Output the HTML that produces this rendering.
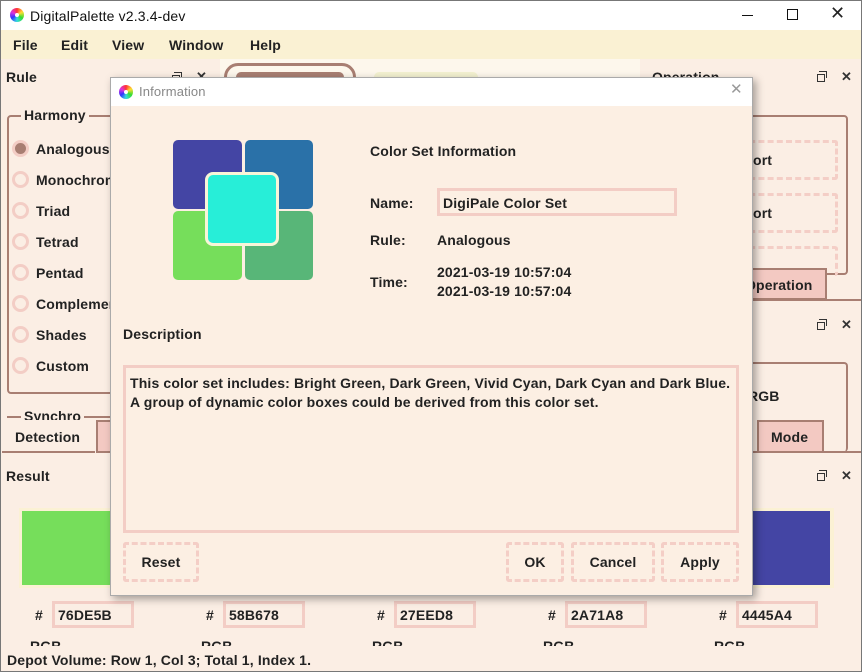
<!DOCTYPE html>
<html><head><meta charset="utf-8"><style>
*{box-sizing:border-box;margin:0;padding:0}
body{width:862px;height:672px;overflow:hidden;position:relative;background:#fbeee4;font-family:"Liberation Sans",sans-serif;font-weight:bold;font-size:14px;letter-spacing:0.15px;color:#222}
.a{position:absolute}
.t{position:absolute;white-space:nowrap;line-height:16px}
.rad{position:absolute;left:12px;width:17px;height:17px;border-radius:50%;border:3px solid #f3cdc5;background:#fbeee4}
.hex{position:absolute;top:601px;width:82px;height:27px;border:3px solid #f3cdc5;padding:3px 0 0 3px}
.dash{position:absolute;border:3px dashed #f4cec6;border-radius:3px;text-align:center}
.fl{position:absolute;width:8px;height:8px;border:1.5px solid #333}
.fl::before{content:"";position:absolute;left:1px;top:-4px;width:7px;height:6px;border:1.5px solid #333;border-left:none;border-bottom:none}
.cx{position:absolute;font-size:13px;line-height:13px;color:#333}
</style></head><body>
<div class="a" style="left:0;top:0;width:862px;height:672px;border:1px solid #777;z-index:50;pointer-events:none"></div>
<div class="a" style="left:0;top:0;width:862px;height:30px;background:#fff"></div>
<div class="a" style="left:10px;top:8px;width:14px;height:14px;border-radius:50%;background:conic-gradient(#f33,#fd3,#3d3,#3dd,#33f,#d3d,#f33)"></div>
<div class="a" style="left:15px;top:13px;width:4px;height:4px;border-radius:50%;background:#fff"></div>
<div class="t" style="left:30px;top:8px;font-weight:normal;font-size:14px;color:#111">DigitalPalette v2.3.4-dev</div>
<div class="a" style="left:742px;top:15px;width:11px;height:1px;background:#111"></div>
<div class="a" style="left:787px;top:9px;width:11px;height:11px;border:1px solid #111"></div>
<div class="t" style="left:830px;top:5px;font-weight:normal;font-size:18px">✕</div>
<div class="a" style="left:0;top:30px;width:862px;height:29px;background:#faf1d3"></div>
<div class="t" style="left:13px;top:37px">File</div>
<div class="t" style="left:61px;top:37px">Edit</div>
<div class="t" style="left:112px;top:37px">View</div>
<div class="t" style="left:169px;top:37px">Window</div>
<div class="t" style="left:250px;top:37px">Help</div>
<div class="a" style="left:220px;top:59px;width:420px;height:20px;background:#fdf7ec"></div>
<div class="a" style="left:224px;top:63px;width:132px;height:30px;border:3px solid #a87e72;border-radius:14px"></div>
<div class="a" style="left:236px;top:72px;width:108px;height:10px;background:#a87e72;border-radius:5px"></div>
<div class="a" style="left:374px;top:72px;width:104px;height:10px;background:#f3f1d0;border-radius:5px"></div>
<div class="t" style="left:6px;top:69px">Rule</div>
<div class="fl" style="left:172px;top:75px"></div><div class="cx" style="left:196px;top:70px">✕</div>
<div class="a" style="left:7px;top:115px;width:210px;height:279px;border:2px solid #a87e72;border-radius:4px"></div>
<div class="t" style="left:21px;top:107px;background:#fbeee4;padding:0 3px">Harmony</div>
<div class="rad" style="top:140px;background:#a87e72;border-color:#f3cdc5"></div>
<div class="t" style="left:36px;top:141px">Analogous</div>
<div class="rad" style="top:171px"></div><div class="t" style="left:36px;top:172px">Monochromatic</div>
<div class="rad" style="top:202px"></div><div class="t" style="left:36px;top:203px">Triad</div>
<div class="rad" style="top:233px"></div><div class="t" style="left:36px;top:234px">Tetrad</div>
<div class="rad" style="top:264px"></div><div class="t" style="left:36px;top:265px">Pentad</div>
<div class="rad" style="top:295px"></div><div class="t" style="left:36px;top:296px">Complementary</div>
<div class="rad" style="top:326px"></div><div class="t" style="left:36px;top:327px">Shades</div>
<div class="rad" style="top:357px"></div><div class="t" style="left:36px;top:358px">Custom</div>
<div class="a" style="left:7px;top:416px;width:210px;height:2px;background:#a87e72"></div>
<div class="t" style="left:21px;top:408px;background:#fbeee4;padding:0 3px;height:12px;overflow:hidden">Synchro</div>
<div class="t" style="left:15px;top:429px">Detection</div>
<div class="a" style="left:2px;top:451px;width:93px;height:2px;background:#a87e72"></div>
<div class="a" style="left:96px;top:420px;width:20px;height:33px;background:#f3c9c2;border:2px solid #a87e72"></div>
<div class="t" style="left:6px;top:468px">Result</div>
<div class="fl" style="left:817px;top:473px"></div><div class="cx" style="left:841px;top:469px">✕</div>
<div class="a" style="left:19px;top:508px;width:100px;height:80px;background:#fbf1d4"></div>
<div class="a" style="left:22px;top:511px;width:95px;height:74px;background:#76de5b"></div>
<div class="a" style="left:752px;top:508px;width:82px;height:80px;background:#fbf1d4"></div>
<div class="a" style="left:752px;top:511px;width:78px;height:74px;background:#4445a4"></div>
<div class="t" style="left:35px;top:607px">#</div><div class="hex" style="left:52px">76DE5B</div>
<div class="t" style="left:206px;top:607px">#</div><div class="hex" style="left:223px">58B678</div>
<div class="t" style="left:377px;top:607px">#</div><div class="hex" style="left:394px">27EED8</div>
<div class="t" style="left:548px;top:607px">#</div><div class="hex" style="left:565px">2A71A8</div>
<div class="t" style="left:719px;top:607px">#</div><div class="hex" style="left:736px">4445A4</div>
<div class="a" style="left:30px;top:638px;width:800px;height:8px;overflow:hidden"><span class="t" style="left:0;top:0">RGB</span><span class="t" style="left:171px;top:0">RGB</span><span class="t" style="left:342px;top:0">RGB</span><span class="t" style="left:513px;top:0">RGB</span><span class="t" style="left:684px;top:0">RGB</span></div>
<div class="t" style="left:7px;top:652px">Depot Volume: Row 1, Col 3; Total 1, Index 1.</div>
<div class="a" style="left:640px;top:59px;width:222px;height:400px;background:#fbeee4"></div>
<div class="t" style="left:652px;top:69px">Operation</div>
<div class="fl" style="left:817px;top:74px"></div><div class="cx" style="left:841px;top:70px">✕</div>
<div class="a" style="left:700px;top:115px;width:148px;height:160px;border:2px solid #a87e72;border-radius:4px"></div>
<div class="dash" style="left:740px;top:140px;width:98px;height:40px"></div><div class="t" style="left:753px;top:152px">ort</div>
<div class="dash" style="left:740px;top:193px;width:98px;height:40px"></div><div class="t" style="left:753px;top:205px">ort</div>
<div class="dash" style="left:740px;top:246px;width:98px;height:30px;border-bottom:none"></div>
<div class="a" style="left:700px;top:268px;width:127px;height:32px;background:#f3c9c2;border:2px solid #a87e72"></div>
<div class="t" style="left:745px;top:277px">Operation</div>
<div class="a" style="left:700px;top:299px;width:162px;height:2px;background:#a87e72"></div>
<div class="fl" style="left:817px;top:322px"></div><div class="cx" style="left:841px;top:318px">✕</div>
<div class="a" style="left:700px;top:362px;width:148px;height:90px;border:2px solid #a87e72;border-radius:4px;border-bottom:none"></div>
<div class="t" style="left:748px;top:388px">RGB</div>
<div class="a" style="left:757px;top:420px;width:67px;height:33px;background:#f3c9c2;border:2px solid #a87e72"></div>
<div class="t" style="left:771px;top:429px">Mode</div>
<div class="a" style="left:700px;top:451px;width:162px;height:2px;background:#a87e72"></div>
<div class="a" style="left:110px;top:77px;width:643px;height:519px;background:#fcefe3;border:1px solid #aaa;box-shadow:3px 3px 8px rgba(0,0,0,.35)"></div>
<div class="a" style="left:111px;top:78px;width:641px;height:28px;background:#fff"></div>
<div class="a" style="left:119px;top:85px;width:14px;height:14px;border-radius:50%;background:conic-gradient(#f33,#fd3,#3d3,#3dd,#33f,#d3d,#f33)"></div>
<div class="a" style="left:124px;top:90px;width:4px;height:4px;border-radius:50%;background:#fff"></div>
<div class="t" style="left:139px;top:84px;font-weight:normal;font-size:13px;color:#888">Information</div>
<div class="t" style="left:730px;top:82px;font-weight:normal;font-size:15px;color:#999">✕</div>
<div class="a" style="left:173px;top:140px;width:69px;height:69px;background:#4445a4;border-radius:5px"></div>
<div class="a" style="left:245px;top:140px;width:68px;height:69px;background:#2a71a8;border-radius:5px"></div>
<div class="a" style="left:173px;top:211px;width:69px;height:69px;background:#76de5b;border-radius:5px"></div>
<div class="a" style="left:245px;top:211px;width:68px;height:69px;background:#58b678;border-radius:5px"></div>
<div class="a" style="left:205px;top:172px;width:74px;height:74px;background:#27eed8;border:3px solid #f8f5d8;border-radius:8px"></div>
<div class="t" style="left:370px;top:143px">Color Set Information</div>
<div class="t" style="left:370px;top:195px">Name:</div>
<div class="a" style="left:437px;top:188px;width:240px;height:28px;border:3px solid #f3cdc5;padding:4px 0 0 3px">DigiPale Color Set</div>
<div class="t" style="left:370px;top:232px">Rule:</div>
<div class="t" style="left:437px;top:232px">Analogous</div>
<div class="t" style="left:370px;top:274px">Time:</div>
<div class="t" style="left:437px;top:264px">2021-03-19 10:57:04</div>
<div class="t" style="left:437px;top:283px">2021-03-19 10:57:04</div>
<div class="t" style="left:123px;top:326px">Description</div>
<div class="a" style="left:123px;top:365px;width:616px;height:168px;border:3px solid #f3cdc5;padding:6px 4px;line-height:19px">This color set includes: Bright Green, Dark Green, Vivid Cyan, Dark Cyan and Dark Blue.<br>A group of dynamic color boxes could be derived from this color set.</div>
<div class="dash" style="left:123px;top:542px;width:76px;height:40px;line-height:34px">Reset</div>
<div class="dash" style="left:506px;top:542px;width:58px;height:40px;line-height:34px">OK</div>
<div class="dash" style="left:571px;top:542px;width:84px;height:40px;line-height:34px">Cancel</div>
<div class="dash" style="left:661px;top:542px;width:78px;height:40px;line-height:34px">Apply</div>
</body></html>
